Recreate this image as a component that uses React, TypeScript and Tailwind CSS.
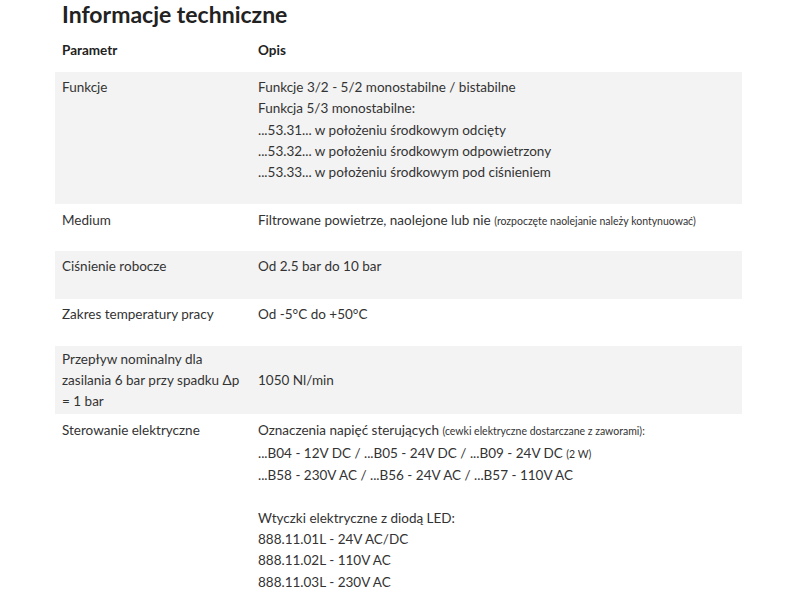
export default function App() {
  return (
    <div className="min-h-screen bg-white text-[#333] font-['Lato',sans-serif]">
      <div className="pl-[55px] pr-[58px]">
        {/* Title */}
        <h1 className="pl-[7px] pt-[1px] text-[23px] leading-[27px] font-bold text-[#222]">
          Informacje techniczne
        </h1>

        {/* Header */}
        <div className="flex h-[44px] items-center text-[13.5px] font-bold text-[#222]">
          <div className="w-[203px] pl-[7px]">Parametr</div>
          <div className="flex-1">Opis</div>
        </div>

        {/* Funkcje */}
        <div className="flex bg-[#f3f3f3] pt-[5px] pb-[21px] text-[13.5px] leading-[21.3px]">
          <div className="w-[203px] pl-[7px] pr-[12px]">Funkcje</div>
          <div className="flex-1">
            <div>Funkcje 3/2 - 5/2 monostabilne / bistabilne</div>
            <div>Funkcja 5/3 monostabilne:</div>
            <div>...53.31... w położeniu środkowym odcięty</div>
            <div>...53.32... w położeniu środkowym odpowietrzony</div>
            <div>...53.33... w położeniu środkowym pod ciśnieniem</div>
          </div>
        </div>

        {/* Medium */}
        <div className="flex h-[47px] pt-[6px] text-[13.5px] leading-[21.3px]">
          <div className="w-[203px] pl-[7px] pr-[12px]">Medium</div>
          <div className="flex-1">
            Filtrowane powietrze, naolejone lub nie{' '}
            <span className="text-[10.5px]">(rozpoczęte naolejanie należy kontynuować)</span>
          </div>
        </div>

        {/* Ciśnienie */}
        <div className="flex h-[48px] bg-[#f3f3f3] pt-[5px] text-[13.5px] leading-[21.3px]">
          <div className="w-[203px] pl-[7px] pr-[12px]">Ciśnienie robocze</div>
          <div className="flex-1">Od 2.5 bar do 10 bar</div>
        </div>

        {/* Zakres */}
        <div className="flex h-[47px] pt-[5px] text-[13.5px] leading-[21.3px]">
          <div className="w-[203px] pl-[7px] pr-[12px]">Zakres temperatury pracy</div>
          <div className="flex-1">Od -5°C do +50°C</div>
        </div>

        {/* Przepływ */}
        <div className="flex h-[68px] items-center bg-[#f3f3f3] text-[13.5px] leading-[21.3px]">
          <div className="w-[203px] pl-[7px] pr-[12px]">
            Przepływ nominalny dla zasilania 6 bar przy spadku Δp = 1 bar
          </div>
          <div className="flex-1">1050 Nl/min</div>
        </div>

        {/* Sterowanie */}
        <div className="flex pt-[6px] pb-[20px] text-[13.5px] leading-[21.3px]">
          <div className="w-[203px] pl-[7px] pr-[12px]">Sterowanie elektryczne</div>
          <div className="flex-1">
            <div>
              Oznaczenia napięć sterujących{' '}
              <span className="text-[10.5px]">(cewki elektryczne dostarczane z zaworami):</span>
            </div>
            <div>
              ...B04 - 12V DC / ...B05 - 24V DC / ...B09 - 24V DC{' '}
              <span className="text-[10.5px]">(2 W)</span>
            </div>
            <div>...B58 - 230V AC / ...B56 - 24V AC / ...B57 - 110V AC</div>
            <div className="h-[21.3px]" />
            <div>Wtyczki elektryczne z diodą LED:</div>
            <div>888.11.01L - 24V AC/DC</div>
            <div>888.11.02L - 110V AC</div>
            <div>888.11.03L - 230V AC</div>
          </div>
        </div>
      </div>
    </div>
  );
}
